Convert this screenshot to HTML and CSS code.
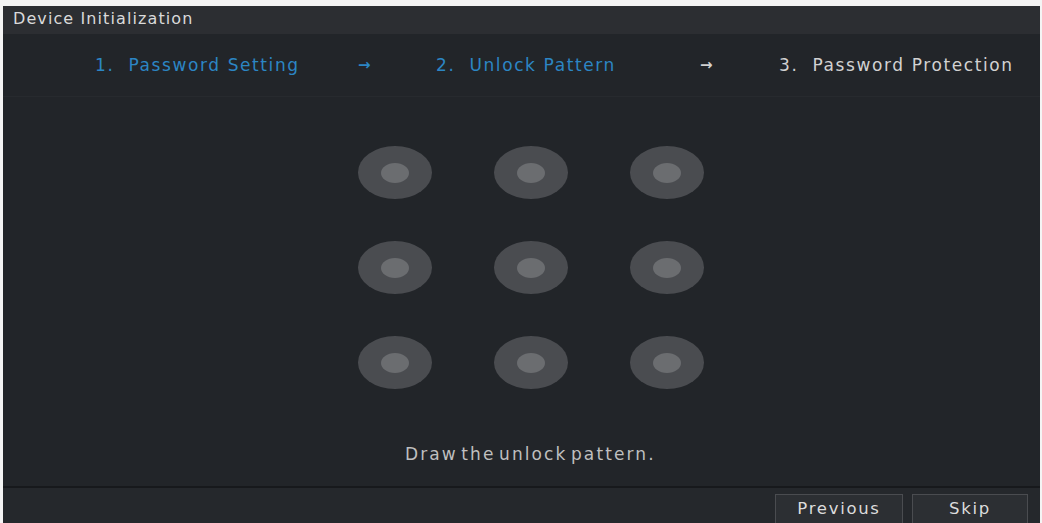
FILE: index.html
```html
<!DOCTYPE html>
<html>
<head>
<meta charset="utf-8">
<link rel="stylesheet" href="styles.css">
</head>
<body>
<div class="frame">
  <div class="titlebar">Device Initialization</div>
  <div class="steps">
    <span class="step step-done">1.&nbsp;&nbsp;Password Setting</span>
    <span class="arrow arrow-done">&rarr;</span>
    <span class="step step-done">2.&nbsp;&nbsp;Unlock Pattern</span>
    <span class="arrow">&rarr;</span>
    <span class="step">3.&nbsp;&nbsp;Password Protection</span>
  </div>
  <div class="main">
    <div class="grid">
      <div class="dot"><div class="core"></div></div>
      <div class="dot"><div class="core"></div></div>
      <div class="dot"><div class="core"></div></div>
      <div class="dot"><div class="core"></div></div>
      <div class="dot"><div class="core"></div></div>
      <div class="dot"><div class="core"></div></div>
      <div class="dot"><div class="core"></div></div>
      <div class="dot"><div class="core"></div></div>
      <div class="dot"><div class="core"></div></div>
    </div>
    <div class="hint">Draw the unlock pattern.</div>
  </div>
  <div class="footer">
    <button class="btn btn-prev">Previous</button>
    <button class="btn btn-skip">Skip</button>
  </div>
</div>
</body>
</html>
```
FILE: styles.css
```css
html, body {
  margin: 0;
  padding: 0;
  background: #f4f4f4;
}
body {
  width: 1042px;
  height: 523px;
  overflow: hidden;
  font-family: "DejaVu Sans", "Open Sans", sans-serif;
}
.frame {
  margin: 6px 2px 0 3px;
  height: 517px;
  background: #222529;
  display: flex;
  flex-direction: column;
}
.titlebar {
  height: 28px;
  line-height: 26px;
  background: #2c2e32;
  color: #dadada;
  font-size: 16px;
  letter-spacing: 1.1px;
  padding-left: 10px;
}
.steps {
  height: 62px;
  display: grid;
  grid-template-columns: 263px 78px 264px 79px auto;
  align-items: center;
  padding-left: 92px;
  font-size: 17px;
  letter-spacing: 1.6px;
  color: #d2d2d2;
  border-bottom: 1px solid #272a2e;
}
.step { white-space: nowrap; }
.step-done { color: #2c86c4; }
.arrow { font-size: 15px; font-weight: bold; letter-spacing: 0; }
.arrow-done { color: #2c86c4; }
.main {
  flex: 1;
  display: flex;
  flex-direction: column;
}
.grid {
  margin-top: 49px;
  margin-left: 355px;
  display: grid;
  grid-template-columns: repeat(3, 74px);
  grid-auto-rows: 53px;
  column-gap: 62px;
  row-gap: 42px;
}
.dot {
  width: 74px;
  height: 53px;
  border-radius: 50%;
  background: #4a4c50;
  display: flex;
  align-items: center;
  justify-content: center;
}
.core {
  width: 28px;
  height: 20px;
  border-radius: 50%;
  background: #6b6d70;
}
.hint {
  margin-top: 55px;
  margin-left: 402px;
  font-size: 17px;
  letter-spacing: 2.1px;
  word-spacing: -4px;
  color: #bfbfbf;
}
.footer {
  height: 35px;
  border-top: 2px solid #17191c;
  background: #25282c;
  display: flex;
  justify-content: flex-end;
  align-items: flex-end;
  padding-right: 12px;
  gap: 9px;
}
.btn {
  height: 29px;
  border: 1px solid #4a4c50;
  border-bottom: none;
  background: #2c2f33;
  color: #dcdcdc;
  font-family: "DejaVu Sans", "Open Sans", sans-serif;
  font-size: 16.5px;
  letter-spacing: 1.7px;
  padding: 0 0 2px 0;
}
.btn-prev { width: 128px; }
.btn-skip { width: 116px; }
```
